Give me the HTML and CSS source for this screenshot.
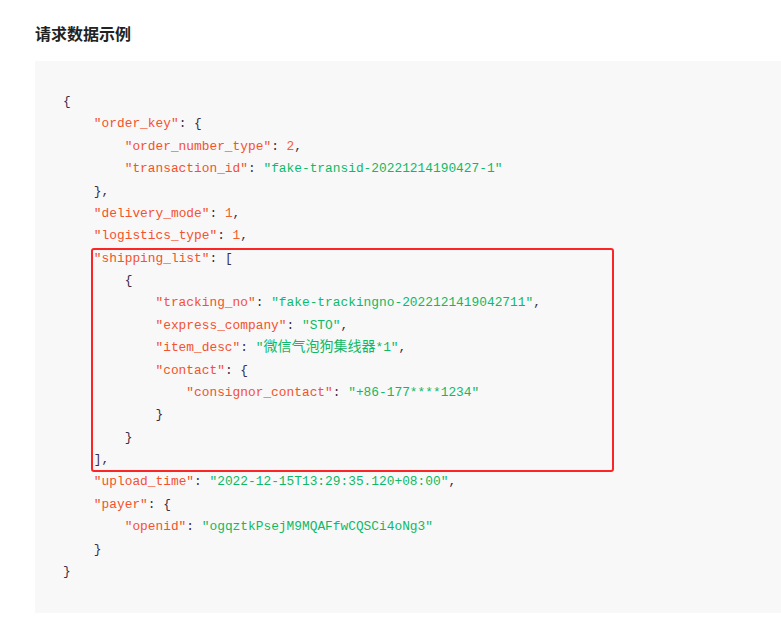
FILE: index.html
```html
<!DOCTYPE html>
<html lang="zh-CN">
<head>
<meta charset="utf-8">
<title>请求数据示例</title>
<link rel="stylesheet" href="styles.css">
</head>
<body>
<h3 class="title">请求数据示例</h3>
<div class="code-block">
<pre class="code"><span class="p">{</span>
    <span class="k">"order_key"</span><span class="p">: {</span>
        <span class="k">"order_number_type"</span><span class="p">: </span><span class="n">2</span><span class="p">,</span>
        <span class="k">"transaction_id"</span><span class="p">: </span><span class="s">"fake-transid-20221214190427-1"</span>
    <span class="p">},</span>
    <span class="k">"delivery_mode"</span><span class="p">: </span><span class="n">1</span><span class="p">,</span>
    <span class="k">"logistics_type"</span><span class="p">: </span><span class="n">1</span><span class="p">,</span>
    <span class="k">"shipping_list"</span><span class="p">: [</span>
        <span class="p">{</span>
            <span class="k">"tracking_no"</span><span class="p">: </span><span class="s">"fake-trackingno-2022121419042711"</span><span class="p">,</span>
            <span class="k">"express_company"</span><span class="p">: </span><span class="s">"STO"</span><span class="p">,</span>
            <span class="k">"item_desc"</span><span class="p">: </span><span class="s">"<span class="cjk">微信气泡狗集线器</span>*1"</span><span class="p">,</span>
            <span class="k">"contact"</span><span class="p">: {</span>
                <span class="k">"consignor_contact"</span><span class="p">: </span><span class="s">"+86-177****1234"</span>
            <span class="p">}</span>
        <span class="p">}</span>
    <span class="p">],</span>
    <span class="k">"upload_time"</span><span class="p">: </span><span class="s">"2022-12-15T13:29:35.120+08:00"</span><span class="p">,</span>
    <span class="k">"payer"</span><span class="p">: {</span>
        <span class="k">"openid"</span><span class="p">: </span><span class="s">"ogqztkPsejM9MQAFfwCQSCi4oNg3"</span>
    <span class="p">}</span>
<span class="p">}</span></pre>
<div class="highlight-box"></div>
</div>
</body>
</html>
```
FILE: styles.css
```css
html, body {
  margin: 0;
  padding: 0;
  background: #ffffff;
}

body {
  width: 781px;
  height: 624px;
  overflow: hidden;
}

.title {
  margin: 0;
  padding: 22px 0 0 35px;
  height: 39px;
  box-sizing: border-box;
  font-family: "Noto Sans CJK SC", sans-serif;
  font-size: 16px;
  font-weight: 700;
  line-height: 22px;
  color: #222222;
}

.code-block {
  position: relative;
  margin: 22px 0 0 35px;
  height: 552px;
  background: #f8f8f8;
  box-sizing: border-box;
  padding: 30px 0 0 28px;
}

.code {
  margin: 0;
  font-family: "Liberation Mono", "DejaVu Sans Mono", monospace;
  font-size: 12.85px;
  line-height: 22.38px;
  color: #3b2e4a;
  white-space: pre;
}

.code .cjk {
  font-family: "Noto Sans CJK SC", sans-serif;
  font-size: 14px;
  line-height: 1;
}

.p { color: #3b2e4a; }
.k { color: #f4512c; }
.n { color: #f0612e; }
.s { color: #0fb866; }

.highlight-box {
  position: absolute;
  left: 56px;
  top: 187px;
  width: 523px;
  height: 224px;
  box-sizing: border-box;
  border: 2.5px solid #fb2525;
  border-radius: 3px;
}
```
